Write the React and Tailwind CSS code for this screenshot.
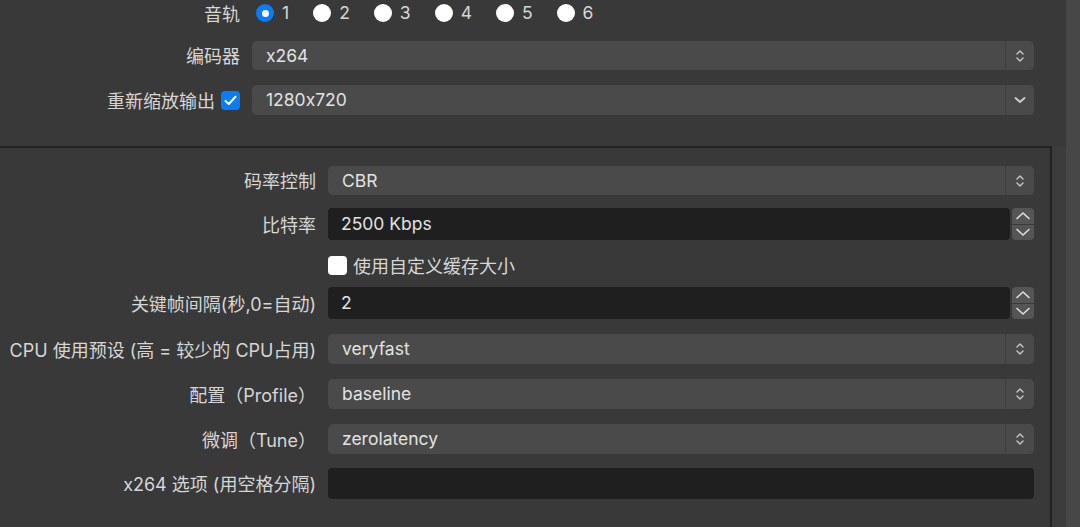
import React from "react";

function UpDown() {
  return (
    <svg width="10" height="16" viewBox="0 0 10 16" fill="none" stroke="#c8c8c8" strokeWidth="1.4" strokeLinecap="round" strokeLinejoin="round">
      <path d="M2 6 L5 3 L8 6" />
      <path d="M2 10 L5 13 L8 10" />
    </svg>
  );
}

function Select({ value, h = "h-[30px]", single = false }) {
  return (
    <div className={`flex ${h} w-full rounded-[5px] bg-[#4a4a4a] overflow-hidden`}>
      <div className="flex flex-1 items-center pl-[14px] pt-[1px] text-[17.5px] text-[#e2e2e2]">{value}</div>
      <div className="w-px bg-[#3e3e3e]" />
      <div className="flex w-[28px] items-center justify-center">
        {single ? (
          <svg width="12" height="8" viewBox="0 0 12 8" fill="none" stroke="#d0d0d0" strokeWidth="1.8" strokeLinecap="round" strokeLinejoin="round">
            <path d="M1.5 2 L6 6 L10.5 2" />
          </svg>
        ) : (
          <UpDown />
        )}
      </div>
    </div>
  );
}

function Spin({ value }) {
  return (
    <div className="flex h-[32px] w-full items-stretch gap-[2px]">
      <div className="flex flex-1 items-center rounded-[4px] bg-[#1f1f1f] pl-[13px] pt-[1px] text-[17.5px] text-[#e2e2e2]">{value}</div>
      <div className="flex w-[22px] flex-col gap-[1px]">
        <div className="flex flex-1 items-center justify-center rounded-t-[4px] bg-[#555555]">
          <svg width="16" height="9" viewBox="0 0 16 9" fill="none" stroke="#e0e0e0" strokeWidth="1.6" strokeLinecap="round" strokeLinejoin="round">
            <path d="M2 7.5 L8 2 L14 7.5" />
          </svg>
        </div>
        <div className="flex flex-1 items-center justify-center rounded-b-[4px] bg-[#555555]">
          <svg width="16" height="9" viewBox="0 0 16 9" fill="none" stroke="#e0e0e0" strokeWidth="1.6" strokeLinecap="round" strokeLinejoin="round">
            <path d="M2 1.5 L8 7 L14 1.5" />
          </svg>
        </div>
      </div>
    </div>
  );
}

function Radio({ checked, label }) {
  return (
    <div className="flex items-center gap-[8px]">
      {checked ? (
        <div className="flex h-[18px] w-[18px] items-center justify-center rounded-full bg-[#0a7cf5]">
          <div className="h-[7px] w-[7px] rounded-full bg-white" />
        </div>
      ) : (
        <div className="h-[18px] w-[18px] rounded-full bg-white" />
      )}
      <span className="text-[17.5px] text-[#d6d6d6]">{label}</span>
    </div>
  );
}

function Label({ children, w }) {
  return (
    <div className={`${w} shrink-0 pt-[2px] text-right text-[18px] text-[#d6d6d6] whitespace-nowrap`}>{children}</div>
  );
}

export default function App() {
  return (
    <div className="flex h-[527px] w-[1080px] overflow-hidden bg-[#393939] font-['Inter','Noto_Sans_CJK_SC',sans-serif] [font-feature-settings:'calt'_0]">
      <div className="flex flex-1 flex-col">
        {/* top section */}
        <div className="flex flex-col pr-[32px]">
          <div className="mt-[4px] flex h-[18px] items-center gap-[12px]">
            <Label w="w-[240px]">音轨</Label>
            <div className="ml-[4px] flex items-center gap-[24px]">
              <Radio checked label="1" />
              <Radio label="2" />
              <Radio label="3" />
              <Radio label="4" />
              <Radio label="5" />
              <Radio label="6" />
            </div>
          </div>
          <div className="mt-[19px] flex items-center gap-[12px]">
            <Label w="w-[240px]">编码器</Label>
            <Select value="x264" h="h-[29px]" />
          </div>
          <div className="mt-[15px] flex items-center gap-[12px]">
            <div className="flex w-[240px] shrink-0 items-center justify-end gap-[6px]">
              <span className="pt-[2px] text-[18px] text-[#d6d6d6]">重新缩放输出</span>
              <div className="flex h-[19px] w-[19px] items-center justify-center rounded-[4px] bg-[#0a7cf5]">
                <svg width="13" height="11" viewBox="0 0 13 11" fill="none" stroke="white" strokeWidth="2" strokeLinecap="round" strokeLinejoin="round">
                  <path d="M1.5 6 L4.8 9 L11.5 1.8" />
                </svg>
              </div>
            </div>
            <Select value="1280x720" single />
          </div>
        </div>

        {/* lower group box */}
        <div className="mt-[31px] flex flex-1">
          <div className="flex w-[1052px] flex-col border-r-2 border-t-2 border-[#222222] pr-[16px]">
            <div className="mt-[18px] flex items-center gap-[12px]">
              <Label w="w-[316px]">码率控制</Label>
              <Select value="CBR" h="h-[29px]" />
            </div>
            <div className="mt-[13px] flex items-center gap-[12px]">
              <Label w="w-[316px]">比特率</Label>
              <Spin value="2500 Kbps" />
            </div>
            <div className="mt-[16px] flex h-[18px] items-center gap-[12px]">
              <div className="w-[316px] shrink-0" />
              <div className="flex items-center gap-[6px]">
                <div className="h-[19px] w-[19px] rounded-[4px] bg-white" />
                <span className="pt-[2px] text-[18px] text-[#d6d6d6]">使用自定义缓存大小</span>
              </div>
            </div>
            <div className="mt-[13px] flex items-center gap-[12px]">
              <Label w="w-[316px]">关键帧间隔(秒,0=自动)</Label>
              <Spin value="2" />
            </div>
            <div className="mt-[15px] flex items-center gap-[12px]">
              <Label w="w-[316px]">CPU 使用预设 (高 = 较少的 CPU占用)</Label>
              <Select value="veryfast" />
            </div>
            <div className="mt-[15px] flex items-center gap-[12px]">
              <Label w="w-[316px]">配置（Profile）</Label>
              <Select value="baseline" />
            </div>
            <div className="mt-[15px] flex items-center gap-[12px]">
              <Label w="w-[316px]">微调（Tune）</Label>
              <Select value="zerolatency" />
            </div>
            <div className="mt-[14px] flex items-center gap-[12px]">
              <Label w="w-[316px]">x264 选项 (用空格分隔)</Label>
              <div className="h-[31px] w-full rounded-[4px] bg-[#1f1f1f]" />
            </div>
          </div>
          <div className="flex-1 bg-[#3c3c3c]" />
        </div>
      </div>
      <div className="w-[14px] bg-[#474747]" />
    </div>
  );
}
